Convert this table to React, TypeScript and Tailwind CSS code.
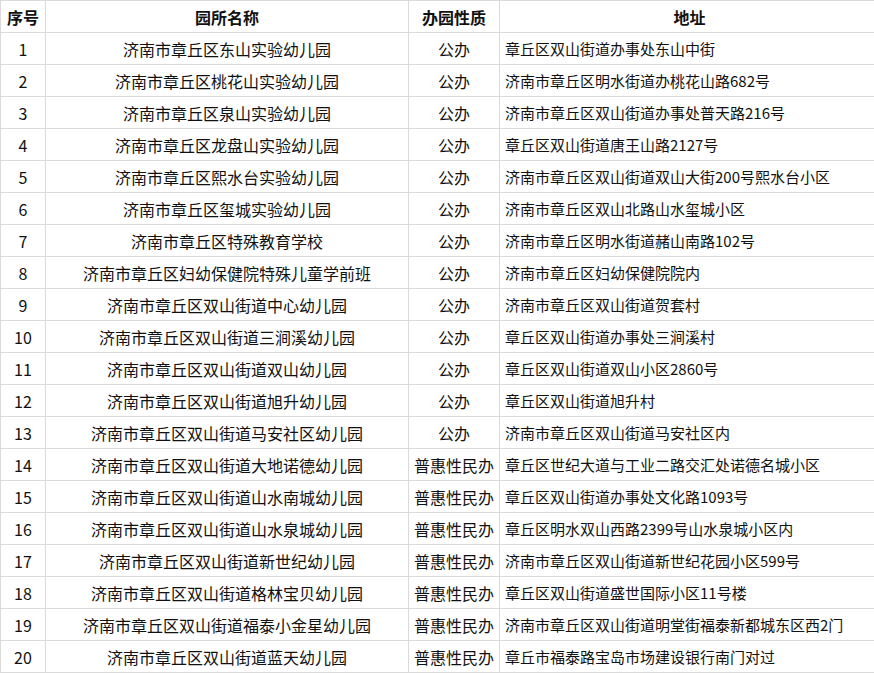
const rows: [string, string, string][] = [
  ["济南市章丘区东山实验幼儿园", "公办", "章丘区双山街道办事处东山中街"],
  ["济南市章丘区桃花山实验幼儿园", "公办", "济南市章丘区明水街道办桃花山路682号"],
  ["济南市章丘区泉山实验幼儿园", "公办", "济南市章丘区双山街道办事处普天路216号"],
  ["济南市章丘区龙盘山实验幼儿园", "公办", "章丘区双山街道唐王山路2127号"],
  ["济南市章丘区熙水台实验幼儿园", "公办", "济南市章丘区双山街道双山大街200号熙水台小区"],
  ["济南市章丘区玺城实验幼儿园", "公办", "济南市章丘区双山北路山水玺城小区"],
  ["济南市章丘区特殊教育学校", "公办", "济南市章丘区明水街道赭山南路102号"],
  ["济南市章丘区妇幼保健院特殊儿童学前班", "公办", "济南市章丘区妇幼保健院院内"],
  ["济南市章丘区双山街道中心幼儿园", "公办", "济南市章丘区双山街道贺套村"],
  ["济南市章丘区双山街道三涧溪幼儿园", "公办", "章丘区双山街道办事处三涧溪村"],
  ["济南市章丘区双山街道双山幼儿园", "公办", "章丘区双山街道双山小区2860号"],
  ["济南市章丘区双山街道旭升幼儿园", "公办", "章丘区双山街道旭升村"],
  ["济南市章丘区双山街道马安社区幼儿园", "公办", "济南市章丘区双山街道马安社区内"],
  ["济南市章丘区双山街道大地诺德幼儿园", "普惠性民办", "章丘区世纪大道与工业二路交汇处诺德名城小区"],
  ["济南市章丘区双山街道山水南城幼儿园", "普惠性民办", "章丘区双山街道办事处文化路1093号"],
  ["济南市章丘区双山街道山水泉城幼儿园", "普惠性民办", "章丘区明水双山西路2399号山水泉城小区内"],
  ["济南市章丘区双山街道新世纪幼儿园", "普惠性民办", "济南市章丘区双山街道新世纪花园小区599号"],
  ["济南市章丘区双山街道格林宝贝幼儿园", "普惠性民办", "章丘区双山街道盛世国际小区11号楼"],
  ["济南市章丘区双山街道福泰小金星幼儿园", "普惠性民办", "济南市章丘区双山街道明堂街福泰新都城东区西2门"],
  ["济南市章丘区双山街道蓝天幼儿园", "普惠性民办", "章丘市福泰路宝岛市场建设银行南门对过"],
];

export default function App() {
  return (
    <div className="w-[874px] h-[673px] overflow-hidden bg-white font-['Noto_Sans_CJK_SC',sans-serif] text-[#111]">
      <table className="w-[880px] table-fixed border-collapse">
        <colgroup>
          <col className="w-[45px]" />
          <col className="w-[363px]" />
          <col className="w-[91px]" />
          <col />
        </colgroup>
        <thead>
          <tr className="h-[32px]">
            <th className="border border-[#dadada] p-0 text-[16px] font-bold leading-none">序号</th>
            <th className="border border-[#dadada] p-0 text-[16px] font-bold leading-none">园所名称</th>
            <th className="border border-[#dadada] p-0 text-[16px] font-bold leading-none">办园性质</th>
            <th className="border border-[#dadada] p-0 text-[16px] font-bold leading-none">地址</th>
          </tr>
        </thead>
        <tbody>
          {rows.map((r, i) => (
            <tr key={i} className="h-[32px]">
              <td className="border border-[#dadada] p-0 text-center text-[16px] leading-none">{i + 1}</td>
              <td className="border border-[#dadada] p-0 text-center text-[16px] leading-none">{r[0]}</td>
              <td className="border border-[#dadada] p-0 text-center text-[16px] leading-none">{r[1]}</td>
              <td className="border border-[#dadada] py-0 pl-[5px] pr-0 text-left text-[15px] leading-none whitespace-nowrap">{r[2]}</td>
            </tr>
          ))}
        </tbody>
      </table>
    </div>
  );
}
